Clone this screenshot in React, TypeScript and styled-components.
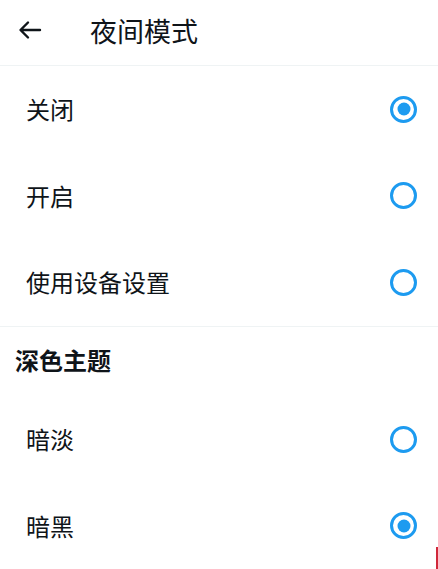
import styled, { createGlobalStyle } from 'styled-components';

const GlobalStyle = createGlobalStyle`
  html, body {
    margin: 0;
    padding: 0;
    background: #ffffff;
  }
  body {
    font-family: "Noto Sans CJK SC", "Noto Sans", sans-serif;
    color: #0f1419;
  }
`;

type Option = { label: string; checked: boolean };

const modeOptions: Option[] = [
  { label: '关闭', checked: true },
  { label: '开启', checked: false },
  { label: '使用设备设置', checked: false },
];

const themeOptions: Option[] = [
  { label: '暗淡', checked: false },
  { label: '暗黑', checked: true },
];

function BackArrow() {
  return (
    <svg width="24" height="20" viewBox="0 0 24 20" fill="none">
      <path
        d="M22 10H3M10 2.5L2.5 10L10 17.5"
        stroke="#0f1419"
        strokeWidth="2.4"
        strokeLinecap="round"
        strokeLinejoin="round"
      />
    </svg>
  );
}

export default function App() {
  return (
    <>
      <GlobalStyle />
      <Page>
        <Header>
          <BackButton>
            <BackArrow />
          </BackButton>
          <Title>夜间模式</Title>
        </Header>
        <Section>
          {modeOptions.map((o) => (
            <Row key={o.label}>
              <Label>{o.label}</Label>
              <Radio $checked={o.checked} />
            </Row>
          ))}
        </Section>
        <Section>
          <SectionTitle>深色主题</SectionTitle>
          {themeOptions.map((o) => (
            <Row key={o.label}>
              <Label>{o.label}</Label>
              <Radio $checked={o.checked} />
            </Row>
          ))}
        </Section>
        <EdgeMark />
      </Page>
    </>
  );
}

const Page = styled.div`
  position: relative;
  width: 438px;
  height: 569px;
  overflow: hidden;
  background: #ffffff;
`;

const Header = styled.header`
  display: flex;
  align-items: center;
  height: 66px;
  box-sizing: border-box;
  padding: 0 0 5px 18px;
  border-bottom: 1px solid #eff3f4;
`;

const BackButton = styled.div`
  display: flex;
  align-items: center;
  justify-content: center;
  width: 24px;
  height: 24px;
`;

const Title = styled.h1`
  margin: 0 0 0 48px;
  font-size: 27px;
  font-weight: 400;
  line-height: 1;
  color: #0f1419;
`;

const Section = styled.section`
  display: flex;
  flex-direction: column;
  border-bottom: 1px solid #eff3f4;

  &:last-of-type {
    border-bottom: none;
  }
`;

const SectionTitle = styled.h2`
  display: flex;
  align-items: center;
  height: 69px;
  box-sizing: border-box;
  margin: 0;
  padding: 0 0 3px 15px;
  font-size: 24px;
  font-weight: 700;
  color: #0f1419;
`;

const Row = styled.div`
  display: flex;
  align-items: center;
  justify-content: space-between;
  height: 86.6px;
  padding: 0 21px 0 26px;
`;

const Label = styled.span`
  font-size: 24px;
  line-height: 1;
  color: #0f1419;
`;

const Radio = styled.span<{ $checked: boolean }>`
  position: relative;
  width: 27px;
  height: 27px;
  box-sizing: border-box;
  border: 3px solid #1d9bf0;
  border-radius: 50%;

  &::after {
    content: '';
    position: absolute;
    left: 50%;
    top: 50%;
    width: 13px;
    height: 13px;
    border-radius: 50%;
    background: #1d9bf0;
    transform: translate(-50%, -50%);
    display: ${(p) => (p.$checked ? 'block' : 'none')};
  }
`;

const EdgeMark = styled.div`
  position: absolute;
  right: 0;
  bottom: 0;
  width: 2px;
  height: 22px;
  background: #d0283a;
`;
